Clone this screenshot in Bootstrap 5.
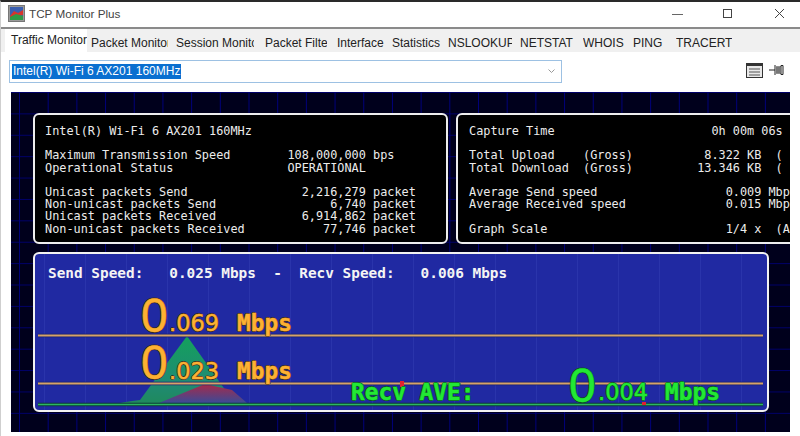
<!DOCTYPE html>
<html lang="en">
<head>
<meta charset="utf-8">
<title>TCP Monitor Plus</title>
<link href="https://cdn.jsdelivr.net/npm/bootstrap@5.3.0/dist/css/bootstrap.min.css" rel="stylesheet">
<style>
html,body{height:100%;margin:0;background:#fff;overflow:hidden}
.app-win{width:800px;height:436px;display:flex;flex-direction:column;background:#fff;border-top:2px solid #2a2a2a;border-left:1px solid #cfcfcf;overflow:hidden;font-family:"Liberation Sans",Arial,sans-serif}
.title-bar{height:27px;flex:none;border-bottom:2px solid #8a8a8a;padding-left:7px;padding-bottom:2px;gap:4px;color:#444;font-size:11.7px}
.win-btn{display:block;flex:none}
.b-min{margin-left:auto}.b-max{margin-left:34px}.b-close{margin-left:37px;margin-right:15px}
.tab-strip{height:23px;flex:none;background:#f0f0f0;font-size:12px;color:#222;padding-left:4px}
.tab-item{display:block;white-space:nowrap;overflow:hidden;margin-right:8px;padding-top:7px;line-height:14px}
.tab-on{background:#fff;margin-right:4px;padding:4px 0 0 6px;box-sizing:content-box}
.w76{width:76px}.w77{width:77px}.w78{width:78px;margin-right:11px}.w62{width:62px;margin-right:10px}.w64{width:64px}.w47{width:47px}.w48{width:48px}.w55{width:55px}.w42{width:42px}.w35{width:35px}.w56{width:56px}
.tool-row{height:40px;flex:none;padding-left:9px;padding-bottom:1px}
.dev-select{width:553px;height:23px;border:1px solid #9dc1e3;padding-left:2px;font-size:12px;color:#fff;margin-left:-1px}
.dev-sel-text{background:#0a6fd0;line-height:15px;padding:0 1px;white-space:nowrap}
.dev-caret{margin-left:auto;margin-right:6px}
.tool-ic{display:block;flex:none}
.ic-list{margin-left:184px;margin-top:-3px}.ic-pin{margin-left:6px;margin-top:-3px}
.scope{width:779px;height:340px;margin-left:10px;flex:none;overflow:hidden;padding:21px 0 0 22px;background-color:#00001c;
background-image:linear-gradient(90deg,#00007a 1px,transparent 1px),linear-gradient(#00006a 1px,transparent 1px);background-size:28.7px 21.4px;background-position:8px 0,0 0}
.panel-row{display:flex;gap:8px;width:900px}
.dark-panel{flex:none;height:131px;background:#000;border:2px solid #eee;border-radius:6px;padding:10px 0 0 10px}
.pn-a{width:415px}.pn-b{width:420px}.pn-b .mono-txt{margin-left:1px}
.mono-txt{margin:0;overflow:visible;color:#ececec;font-family:"DejaVu Sans Mono","Liberation Mono",monospace;font-size:11.85px;line-height:12.2px}
.graph-panel{position:relative;width:736px;height:160px;margin-top:8px;border:2px solid #f2f2f2;border-radius:6px;overflow:hidden;background-color:#2029a2;
background-image:linear-gradient(90deg,#2a34ab 1px,transparent 1px);background-size:41px 100%;background-position:9px 0}
.speed-line{margin:0;padding:10px 0 0 13px;color:#f4f4f4;font:700 14.4px/18px "DejaVu Sans Mono",monospace;position:relative}
.graph-svg{position:absolute;left:0;top:0;display:block}
.read-out{position:absolute;white-space:pre;line-height:1}
.c-or{color:#fdb132;-webkit-text-stroke:.5px #fdb132;text-shadow:1px 0 #3a2a20,-1px 0 #3a2a20,0 1px #3a2a20,0 -1px #3a2a20}
.c-gr{color:#22e834;-webkit-text-stroke:.5px #22e834;text-shadow:1px 0 #0c4a20,-1px 0 #0c4a20,0 1px #0c4a20,0 -1px #0c4a20}
.big-0{font:400 48px/48px "Liberation Sans",Arial,sans-serif}
.mid-n{font:400 22.5px/26px "DejaVu Sans",sans-serif}
.unit-t{font:700 22.8px/26px "DejaVu Sans Mono",monospace}
.ro-a0{left:106px;top:38px}.ro-an{left:134px;top:56px}.ro-au{left:202px;top:56px}
.ro-b0{left:106px;top:85px}.ro-bn{left:134px;top:104px}.ro-bu{left:202px;top:104px}
.ro-c{left:316px;top:125px}.ro-c0{left:534px;top:108px}.ro-cn{left:563px;top:125px}.ro-cu{left:630px;top:125px}
</style>
</head>
<body>
<div class="app-win">
  <div class="title-bar d-flex align-items-center">
    <svg width="17" height="17" viewBox="0 0 17 17" class="win-btn"><rect x="0.5" y="0.5" width="16" height="16" fill="#9a9a9a" stroke="#777"/><rect x="2" y="2" width="13" height="13" fill="#3a5fb0"/><path d="M2 11 L6 6 L10 8 L15 5 L15 10 L2 13Z" fill="#d8342c"/><path d="M2 12 L8 9 L15 11 L15 15 L2 15Z" fill="#2f9a45"/></svg>
    <span>TCP Monitor Plus</span>
    <svg width="12" height="12" viewBox="0 0 12 12" class="win-btn b-min"><path d="M0 6.5H11" stroke="#666"/></svg>
    <svg width="11" height="11" viewBox="0 0 11 11" class="win-btn b-max"><rect x="1.5" y="1.5" width="8" height="8" fill="none" stroke="#444"/></svg>
    <svg width="11" height="11" viewBox="0 0 11 11" class="win-btn b-close"><path d="M1 1L10 10M10 1L1 10" stroke="#444"/></svg>
  </div>
  <nav class="tab-strip d-flex">
    <span class="tab-item tab-on w76">Traffic Monitor</span>
    <span class="tab-item w77">Packet Monitor</span>
    <span class="tab-item w78">Session Monitor</span>
    <span class="tab-item w62">Packet Filter</span>
    <span class="tab-item w47">Interface</span>
    <span class="tab-item w48">Statistics</span>
    <span class="tab-item w64">NSLOOKUP</span>
    <span class="tab-item w55">NETSTAT</span>
    <span class="tab-item w42">WHOIS</span>
    <span class="tab-item w35">PING</span>
    <span class="tab-item w56">TRACERT</span>
  </nav>
  <div class="tool-row d-flex align-items-center">
    <div class="dev-select d-flex align-items-center">
      <span class="dev-sel-text">Intel(R) Wi-Fi 6 AX201 160MHz</span>
      <svg width="7" height="5" viewBox="0 0 7 5" class="dev-caret"><path d="M0.5 0.5L3.5 3.5L6.5 0.5" fill="none" stroke="#999"/></svg>
    </div>
    <svg width="17" height="15" viewBox="0 0 17 15" class="tool-ic ic-list"><rect x="0.5" y="0.5" width="16" height="14" fill="#e8e8e8" stroke="#333"/><rect x="1" y="1" width="15" height="2" fill="#333"/><path d="M3 6H14M3 9H14M3 12H14" stroke="#555"/></svg>
    <svg width="16" height="12" viewBox="0 0 16 12" class="tool-ic ic-pin"><path d="M0 6H6" stroke="#222"/><path d="M6 1V11M7 3H12M7 9H12M12 1.5V10.5H14V1.5Z" fill="none" stroke="#222"/><rect x="7" y="3" width="5" height="6" fill="#777"/></svg>
  </div>
  <main class="scope">
    <div class="panel-row">
      <section class="dark-panel pn-a"><pre class="mono-txt">Intel(R) Wi-Fi 6 AX201 160MHz

Maximum Transmission Speed        108,000,000 bps
Operational Status                OPERATIONAL

Unicast packets Send                2,216,279 packet
Non-unicast packets Send                6,740 packet
Unicast packets Received            6,914,862 packet
Non-unicast packets Received           77,746 packet</pre></section>
      <section class="dark-panel pn-b"><pre class="mono-txt">Capture Time                      0h 00m 06s

Total Upload    (Gross)          8.322 KB  (
Total Download  (Gross)         13.346 KB  (

Average Send speed                  0.009 Mbps
Average Received speed              0.015 Mbps

Graph Scale                         1/4 x  (Auto)</pre></section>
    </div>
    <section class="graph-panel">
      <svg class="graph-svg" width="732" height="156" viewBox="35 254 732 156">
        <defs>
          <linearGradient id="ga" x1="0" y1="0" x2="0" y2="1"><stop offset="0" stop-color="#14a05c"/><stop offset=".7" stop-color="#1f8a74"/><stop offset="1" stop-color="#1f8a5c"/></linearGradient>
          <linearGradient id="gb" x1="0" y1="0" x2="0" y2="1"><stop offset="0" stop-color="#a82a48"/><stop offset="1" stop-color="#3a4a98"/></linearGradient>
        </defs>
        <path d="M38 404L120 403L132 401L140 400L187 336L233 401L250 404Z" fill="url(#ga)"/>
        <path d="M159 403L205 384L232 390L247 403Z" fill="url(#gb)"/>
        <path d="M38 335.5H763M38 383.5H763" stroke="#14206e" stroke-width="3.5"/>
        <path d="M38 335.5H763M38 383.5H763" stroke="#d6a268" stroke-width="1.8"/>
        <path d="M38 404.5H763" stroke="#0d3a3a" stroke-width="3.5"/>
        <path d="M38 404.5H763" stroke="#2bb662" stroke-width="1.6"/>
        <path d="M400 381h4v6h-4zM640 391h4v4h-4zM642 402h4v3h-4z" fill="#e02030"/>
      </svg>
      <pre class="speed-line">Send Speed:   0.025 Mbps  -  Recv Speed:   0.006 Mbps</pre>
      <span class="read-out c-or big-0 ro-a0">0</span>
      <span class="read-out c-or mid-n ro-an">.069</span>
      <span class="read-out c-or unit-t ro-au">Mbps</span>
      <span class="read-out c-or big-0 ro-b0">0</span>
      <span class="read-out c-or mid-n ro-bn">.023</span>
      <span class="read-out c-or unit-t ro-bu">Mbps</span>
      <span class="read-out c-gr unit-t ro-c">Recv AVE:</span>
      <span class="read-out c-gr big-0 ro-c0">0</span>
      <span class="read-out c-gr mid-n ro-cn">.004</span>
      <span class="read-out c-gr unit-t ro-cu">Mbps</span>
    </section>
  </main>
</div>
</body>
</html>
